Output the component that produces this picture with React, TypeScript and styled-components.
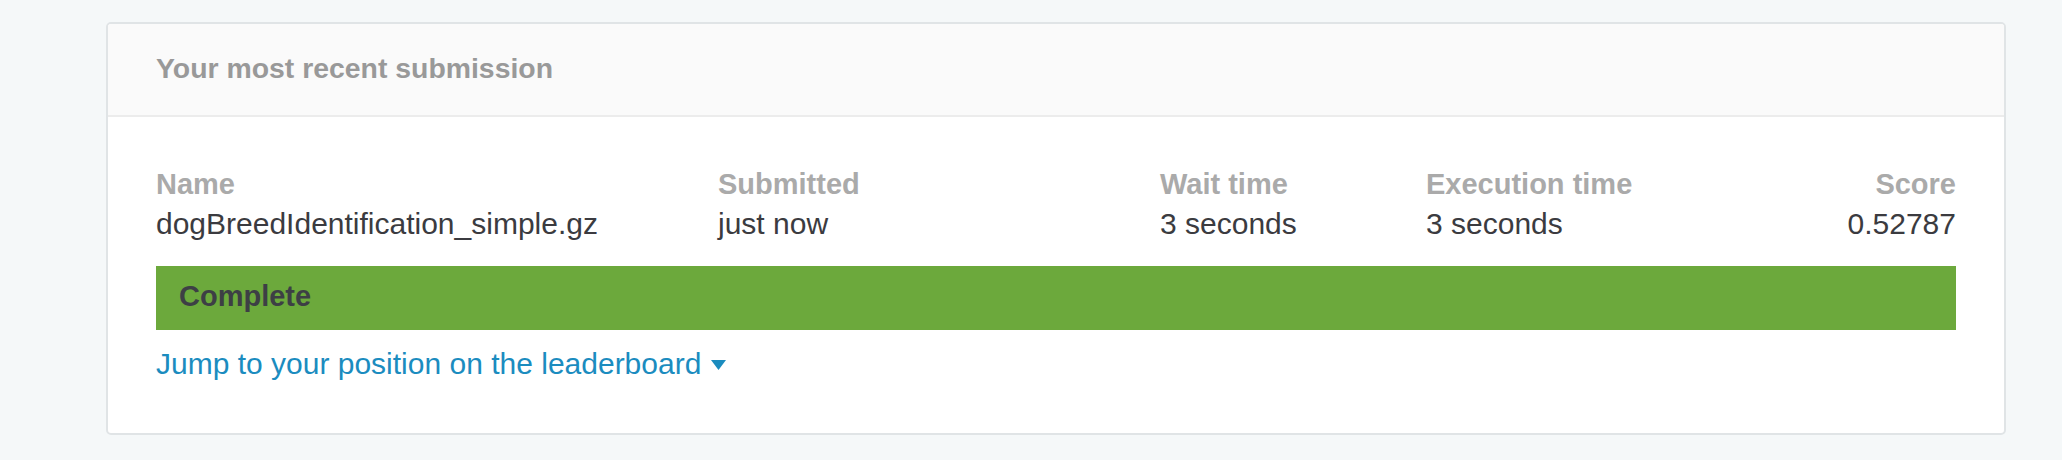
import React from "react";
import styled, { createGlobalStyle } from "styled-components";

const GlobalStyle = createGlobalStyle`
  html, body {
    margin: 0;
    padding: 0;
    background: #f5f8f9;
  }
  body {
    padding: 22px 56px 25px 106px;
    font-family: "Liberation Sans", Arial, sans-serif;
  }
`;

const Card = styled.section`
  background: #ffffff;
  border: 2px solid #e0e4e6;
  border-radius: 5px;
  overflow: hidden;
`;

const CardHeader = styled.header`
  background: #fafafa;
  border-bottom: 2px solid #ececec;
  padding: 28px 48px 31px;
`;

const HeaderTitle = styled.h2`
  margin: 0;
  font-size: 28.4px;
  line-height: 32px;
  font-weight: 700;
  color: #999999;
`;

const CardBody = styled.div`
  padding: 47px 48px 49px;
`;

const InfoGrid = styled.div`
  display: grid;
  grid-template-columns: 562px 442px 266px 1fr auto;
`;

const Field = styled.div<{ $align?: "left" | "right" }>`
  display: flex;
  flex-direction: column;
  text-align: ${(p) => p.$align ?? "left"};
`;

const Label = styled.span`
  font-size: 29px;
  line-height: 40px;
  font-weight: 700;
  color: #aaaaaa;
  white-space: nowrap;
`;

const Value = styled.span`
  font-size: 30px;
  line-height: 40px;
  color: #3b3b40;
  white-space: nowrap;
`;

const StatusBar = styled.div`
  margin-top: 22px;
  height: 64px;
  box-sizing: border-box;
  background: #6ca93c;
  padding: 0 0 4px 23px;
  font-size: 29px;
  line-height: 60px;
  font-weight: 700;
  color: #3d3f45;
`;

const JumpLink = styled.a`
  display: inline-block;
  margin-top: 14px;
  font-size: 30px;
  line-height: 40px;
  color: #1b8cbf;
  text-decoration: none;
  cursor: pointer;
`;

const Caret = styled.svg`
  margin-left: 10px;
  vertical-align: 4px;
`;

const fields: { label: string; value: string; align?: "left" | "right" }[] = [
  { label: "Name", value: "dogBreedIdentification_simple.gz" },
  { label: "Submitted", value: "just now" },
  { label: "Wait time", value: "3 seconds" },
  { label: "Execution time", value: "3 seconds" },
  { label: "Score", value: "0.52787", align: "right" },
];

export default function App() {
  return (
    <>
      <GlobalStyle />
      <Card>
        <CardHeader>
          <HeaderTitle>Your most recent submission</HeaderTitle>
        </CardHeader>
        <CardBody>
          <InfoGrid>
            {fields.map((f) => (
              <Field key={f.label} $align={f.align}>
                <Label>{f.label}</Label>
                <Value>{f.value}</Value>
              </Field>
            ))}
          </InfoGrid>
          <StatusBar>Complete</StatusBar>
          <JumpLink>
            Jump to your position on the leaderboard
            <Caret width="15" height="10" viewBox="0 0 15 10">
              <path d="M0 0 H15 L7.5 10 Z" fill="#1b8cbf" />
            </Caret>
          </JumpLink>
        </CardBody>
      </Card>
    </>
  );
}
